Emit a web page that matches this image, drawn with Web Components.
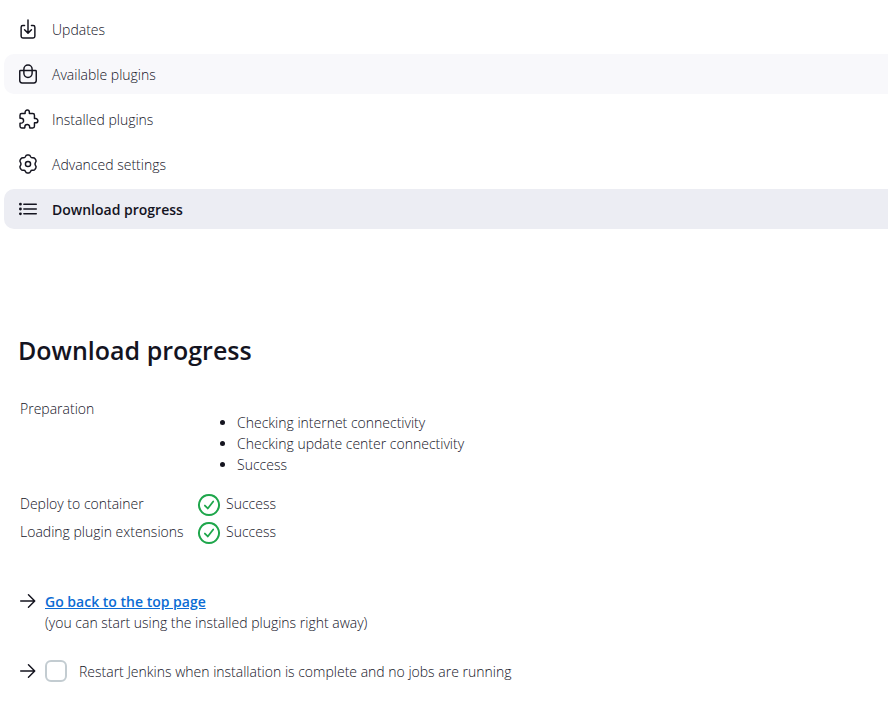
<!DOCTYPE html>
<html lang="en">
<head>
<meta charset="utf-8">
<title>Download progress - Jenkins</title>
<style>
  body {
    margin: 0;
    background: #fff;
    color: #14141f;
    font: 300 14px/21px "Open Sans", "Noto Sans", sans-serif;
  }
</style>
</head>
<body>
<plugin-manager></plugin-manager>

<script>
const icons = {
  updates: `<path d="M336 176h40a40 40 0 0140 40v208a40 40 0 01-40 40H136a40 40 0 01-40-40V216a40 40 0 0140-40h40M176 272l80 80 80-80M256 48v288"/>`,
  bag: `<path d="M80 176a16 16 0 00-16 16v216c0 30 26 56 56 56h272c30 0 56-25 56-55V192a16 16 0 00-16-16zM160 176v-32a96 96 0 01192 0v32M160 176v64a96 96 0 00192 0v-64"/>`,
  puzzle: `<path transform="translate(22 0)" d="M413.66 246.1H386a2 2 0 01-2-2v-77.24A38.86 38.86 0 00345.14 128H267.9a2 2 0 01-2-2V98.34c0-27.14-21.5-49.86-48.64-50.33a49.53 49.53 0 00-50.4 49.51V126a2 2 0 01-2 2H87.62A39.74 39.74 0 0048 167.62V238a2 2 0 002 2h26.91c29.37 0 53.68 25.48 54.09 54.85.42 29.87-23.51 57.15-53.29 57.15H50a2 2 0 00-2 2v70.38A39.74 39.74 0 0087.62 464H158a2 2 0 002-2v-20.93c0-30.28 24.75-56.35 55-57.06 30.1-.7 57 20.31 57 50.28V462a2 2 0 002 2h71.14A38.86 38.86 0 00384 425.14v-78a2 2 0 012-2h28.48c27.63 0 49.52-22.67 49.52-50.4s-23.2-48.64-50.34-48.64z"/>`,
  gear: `<path d="M194 88Q210 46 240 46h32q30 0 46 42 10 24 36 22 46-8 64 20l22 38q14 24-10 52-24 36 0 72 24 28 10 52l-22 38q-18 28-64 20-26-2-36 22-16 42-46 42h-32q-30 0-46-42-10-24-36-22-46 8-64-20l-22-38q-14-24 10-52 24-36 0-72-24-28-10-52l22-38q18-28 64-20 26 2 36-22z"/><circle cx="256" cy="256" r="60"/>`,
  list: `<path d="M160 144h288M160 256h288M160 368h288" stroke-width="36"/><g fill="currentColor"><circle cx="80" cy="144" r="16"/><circle cx="80" cy="256" r="16"/><circle cx="80" cy="368" r="16"/></g>`,
  success: `<path d="M256 43a213 213 0 10.1 0z" stroke-width="42"/><path d="M346 182L230 330l-62-62" stroke-width="38"/>`,
  arrow: `<path d="M268 96l160 160-160 160M416 256H70" stroke-width="38"/>`
};

class JenkinsIcon extends HTMLElement {
  constructor() {
    super();
    this.root = this.attachShadow({ mode: 'open' });
  }

  connectedCallback() {
    this.root.innerHTML = `
      <style>
        :host {
          display: block;
          flex: none;
          width: 22px;
          height: 22px;
        }

        svg {
          display: block;
          width: 100%;
          height: 100%;
          overflow: visible;
        }
      </style>
      <svg viewBox="0 0 512 512" fill="none" stroke="currentColor" stroke-width="34"
        stroke-linecap="round" stroke-linejoin="round" aria-hidden="true">${icons[this.getAttribute('name')]}</svg>
    `;
  }
}

class SideTask extends HTMLElement {
  constructor() {
    super();
    this.root = this.attachShadow({ mode: 'open' });
  }

  connectedCallback() {
    this.root.innerHTML = `
      <style>
        :host {
          display: block;
        }

        a {
          display: flex;
          align-items: center;
          gap: 13px;
          height: 40px;
          padding: 0 13px;
          border-radius: 10px 0 0 10px;
          color: inherit;
          text-decoration: none;
        }

        :host([hovered]) a {
          background: #f8f8fb;
        }

        :host([active]) a {
          background: #ecedf3;
          font-weight: 600;
        }
      </style>
      <a href="#"><jenkins-icon name="${this.getAttribute('icon')}"></jenkins-icon><span><slot></slot></span></a>
    `;
  }
}

class StatusText extends HTMLElement {
  constructor() {
    super();
    this.root = this.attachShadow({ mode: 'open' });
    this.root.innerHTML = `
      <style>
        :host {
          display: flex;
          gap: 5px;
        }

        jenkins-icon {
          width: 24px;
          height: 24px;
          color: #1ea64b;
        }
      </style>
      <jenkins-icon name="success"></jenkins-icon><span><slot></slot></span>
    `;
  }
}

class ProgressTable extends HTMLElement {
  constructor() {
    super();
    this.root = this.attachShadow({ mode: 'open' });
    this.root.innerHTML = `
      <style>
        :host {
          display: block;
        }

        table {
          border-spacing: 2px;
        }

        th, td {
          padding: 1px;
          vertical-align: top;
          text-align: left;
          font-weight: inherit;
        }

        th {
          width: 173px;
        }

        ul {
          margin: 14px 0;
          padding-left: 40px;
        }
      </style>
      <table>
        <tr>
          <th scope="row">Preparation</th>
          <td>
            <ul>
              <li>Checking internet connectivity</li>
              <li>Checking update center connectivity</li>
              <li>Success</li>
            </ul>
          </td>
        </tr>
        <tr>
          <th scope="row">Deploy to container</th>
          <td><status-text>Success</status-text></td>
        </tr>
        <tr>
          <th scope="row">Loading plugin extensions</th>
          <td><status-text>Success</status-text></td>
        </tr>
      </table>
    `;
  }
}

class NextSteps extends HTMLElement {
  constructor() {
    super();
    this.root = this.attachShadow({ mode: 'open' });
    this.root.innerHTML = `
      <style>
        :host {
          display: flex;
          flex-direction: column;
          gap: 27px;
        }

        .step {
          display: flex;
          gap: 7px;
        }

        .step > jenkins-icon {
          width: 20px;
          height: 20px;
        }

        a {
          color: #0b6cd4;
          font-weight: 600;
        }

        .restart {
          align-items: center;
        }

        label {
          display: flex;
          align-items: center;
          gap: 12px;
        }

        input {
          appearance: none;
          width: 22px;
          height: 22px;
          margin: 0;
          border: 2px solid #c3ccd1;
          border-radius: 6px;
        }
      </style>
      <div class="step">
        <jenkins-icon name="arrow"></jenkins-icon>
        <div>
          <a href="#">Go back to the top page</a>
          <div>(you can start using the installed plugins right away)</div>
        </div>
      </div>
      <div class="step restart">
        <jenkins-icon name="arrow"></jenkins-icon>
        <label><input type="checkbox"><span>Restart Jenkins when installation is complete and no jobs are running</span></label>
      </div>
    `;
  }
}

class PluginManager extends HTMLElement {
  constructor() {
    super();
    this.root = this.attachShadow({ mode: 'open' });
    this.root.innerHTML = `
      <style>
        :host {
          display: block;
        }

        nav {
          display: flex;
          flex-direction: column;
          gap: 5px;
          padding: 9px 0 0 4px;
        }

        main {
          padding: 101px 18px 16px;
        }

        h1 {
          margin: 0 0 25px;
          font-size: 25px;
          line-height: 40px;
          font-weight: 600;
        }

        progress-table {
          margin-left: -1px;
        }

        next-steps {
          margin-top: 43px;
        }
      </style>
      <nav>
        <side-task icon="updates">Updates</side-task>
        <side-task icon="bag" hovered>Available plugins</side-task>
        <side-task icon="puzzle">Installed plugins</side-task>
        <side-task icon="gear">Advanced settings</side-task>
        <side-task icon="list" active>Download progress</side-task>
      </nav>
      <main>
        <h1>Download progress</h1>
        <progress-table></progress-table>
        <next-steps></next-steps>
      </main>
    `;
  }
}

customElements.define('jenkins-icon', JenkinsIcon);
customElements.define('side-task', SideTask);
customElements.define('status-text', StatusText);
customElements.define('progress-table', ProgressTable);
customElements.define('next-steps', NextSteps);
customElements.define('plugin-manager', PluginManager);
</script>
</body>
</html>
